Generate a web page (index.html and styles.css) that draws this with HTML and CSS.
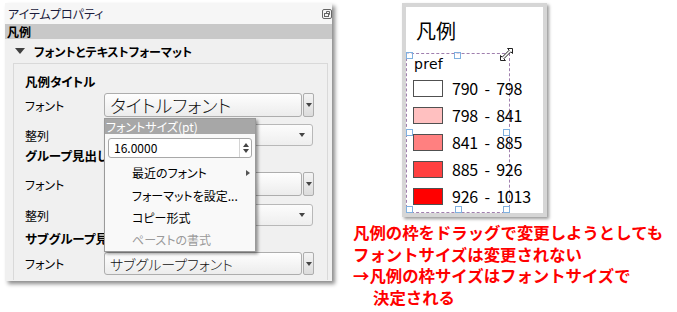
FILE: index.html
```html
<!DOCTYPE html>
<html lang="ja">
<head>
<meta charset="utf-8">
<title>凡例</title>
<link rel="stylesheet" href="styles.css">
</head>
<body>
<div class="page">
  <div class="props">
    <div class="titlebar">
      <span>アイテムプロパティ</span>
      <svg class="float-icon" width="10" height="10" viewBox="0 0 10 10"><rect x="0.5" y="0.5" width="9" height="9" rx="1.5" fill="none" stroke="#666"/><rect x="2.5" y="4.5" width="4" height="3" fill="none" stroke="#666"/><path d="M4.5 4.5V2.5H7.5V5.5H6.5" fill="none" stroke="#666"/></svg>
    </div>
    <div class="header">凡例</div>
    <div class="section"><span class="tri"></span>フォントとテキストフォーマット</div>
    <div class="group">
      <div class="heading h1">凡例タイトル</div>
      <div class="row fontrow f1"><span class="label">フォント</span><div class="fontbtn big">タイトルフォント</div><div class="dropbtn"><i class="arr"></i></div></div>
      <div class="row comborow c1"><span class="label">整列</span><div class="combo"><i class="arr"></i></div></div>
      <div class="heading h2">グループ見出し</div>
      <div class="row fontrow f2"><span class="label">フォント</span><div class="fontbtn"></div><div class="dropbtn"><i class="arr"></i></div></div>
      <div class="row comborow c2"><span class="label">整列</span><div class="combo"><i class="arr"></i></div></div>
      <div class="heading h3">サブグループ見出し</div>
      <div class="row fontrow f3"><span class="label">フォント</span><div class="fontbtn mid">サブグループフォント</div><div class="dropbtn"><i class="arr"></i></div></div>
    </div>
    <div class="popup">
      <div class="pop-head">フォントサイズ(pt)</div>
      <div class="spin"><span class="spin-val">16.0000</span><span class="spin-btns"><i class="up"></i><i class="down"></i></span></div>
      <div class="item"><span>最近のフォント</span><i class="sub"></i></div>
      <div class="item"><span>フォーマットを設定...</span></div>
      <div class="item"><span>コピー形式</span></div>
      <div class="item disabled"><span>ペーストの書式</span></div>
    </div>
  </div>
  <div class="right">
    <div class="legend">
      <div class="legend-title">凡例</div>
      <div class="frame">
        <div class="pref">pref</div>
        <div class="entry"><span class="sw sw1"></span><span class="rng">790 - 798</span></div>
        <div class="entry"><span class="sw sw2"></span><span class="rng">798 - 841</span></div>
        <div class="entry"><span class="sw sw3"></span><span class="rng">841 - 885</span></div>
        <div class="entry"><span class="sw sw4"></span><span class="rng">885 - 926</span></div>
        <div class="entry"><span class="sw sw5"></span><span class="rng">926 - 1013</span></div>
        <span class="hd tl"></span><span class="hd tm"></span>
        <span class="hd ml"></span><span class="hd mr"></span>
        <span class="hd bl"></span><span class="hd bm"></span><span class="hd br"></span>
        <svg class="cursor" width="15" height="15" viewBox="0 0 15 15"><path d="M8.5 1.5H13.5V6.5L11.8 4.8L4.8 11.8L6.5 13.5H1.5V8.5L3.2 10.2L10.2 3.2Z" fill="#fff" stroke="#222" stroke-width="1" stroke-linejoin="round"/></svg>
      </div>
    </div>
    <div class="note">
      <div>凡例の枠をドラッグで変更しようとしても</div>
      <div>フォントサイズは変更されない</div>
      <div>→凡例の枠サイズはフォントサイズで</div>
      <div class="indent">決定される</div>
    </div>
  </div>
</div>
</body>
</html>
```

FILE: styles.css
```css
* { box-sizing: border-box; margin: 0; padding: 0; }
body { background: #fff; font-family: "Noto Sans CJK JP", "Noto Sans", sans-serif; }
.page { display: flex; align-items: flex-start; gap: 21px; padding: 3px 0 0 5px; }

/* left properties panel */
.props { position: relative; width: 327px; height: 278px; background: #f0f0f0; box-shadow: 3px 3px 4px rgba(0,0,0,.45); display: flex; flex-direction: column; font-size: 12px; font-feature-settings: "palt"; color: #000; }
.titlebar { height: 21px; display: flex; align-items: center; justify-content: space-between; padding-left: 3px; background: #f6f6f6; color: #1b1b3c; }
.float-icon { display: block; margin-right: 0; }
.header { height: 15px; line-height: 15px; background: #c8c8c8; font-weight: bold; padding-left: 2px; }
.section { height: 24px; display: flex; align-items: center; padding-left: 10px; font-weight: bold; }
.tri { width: 0; height: 0; border-left: 5px solid transparent; border-right: 5px solid transparent; border-top: 6px solid #404040; margin-right: 9px; }
.group { margin: 0 4px 0 8px; height: 217px; border: 1px solid #d9d9d9; border-bottom: none; padding-left: 11px; display: flex; flex-direction: column; }
.heading { height: 20px; line-height: 20px; font-weight: bold; font-size: 12.5px; }
.h1 { margin-top: 8px; }
.h3 { margin-top: 3px; }
.row { display: flex; align-items: stretch; }
.label { width: 79px; display: flex; align-items: center; }
.f1 { margin-top: 1px; height: 24px; }
.c1 { margin-top: 7px; height: 22px; }
.f2 { margin-top: 6px; height: 24px; }
.c2 { margin-top: 8px; height: 22px; }
.f3 { margin-top: 3px; height: 23px; }
.fontbtn { width: 198px; border: 1px solid #adadad; border-radius: 3px; background: linear-gradient(#fefefe, #ececec); display: flex; align-items: center; padding-left: 5px; color: #111; overflow: hidden; white-space: nowrap; }
.fontbtn.big { font-size: 18px; font-weight: 300; }
.fontbtn.mid { font-size: 14px; font-weight: 300; }
.dropbtn { width: 11px; margin-left: 1px; border: 1px solid #adadad; border-radius: 2px; background: linear-gradient(#f4f4f4, #dcdcdc); display: flex; align-items: center; justify-content: center; }
.combo { width: 209px; border: 1px solid #b8b8b8; border-radius: 3px; background: linear-gradient(#fcfcfc, #eeeeee); display: flex; align-items: center; justify-content: flex-end; padding-right: 7px; }
.arr { display: block; width: 0; height: 0; border-left: 3.5px solid transparent; border-right: 3.5px solid transparent; border-top: 4px solid #444; }

/* popup menu */
.popup { position: absolute; left: 99px; top: 115px; width: 152px; height: 134px; background: #f9f9f9; border: 1px solid #9a9a9a; box-shadow: 2px 2px 3px rgba(0,0,0,.4); display: flex; flex-direction: column; }
.pop-head { height: 15px; line-height: 15px; background: #a7a7a7; color: #fff; padding-left: 1px; }
.spin { margin: 4px 3px 0 3px; height: 20px; border: 1px solid #a8a8a8; border-radius: 3px; background: #fff; display: flex; align-items: center; justify-content: space-between; }
.spin-val { padding-left: 5px; }
.spin-btns { width: 12px; height: 100%; border-left: 1px solid #d4d4d4; display: flex; flex-direction: column; align-items: center; justify-content: center; gap: 2px; }
.spin-btns .up { width: 0; height: 0; border-left: 3.5px solid transparent; border-right: 3.5px solid transparent; border-bottom: 4px solid #444; }
.spin-btns .down { width: 0; height: 0; border-left: 3.5px solid transparent; border-right: 3.5px solid transparent; border-top: 4px solid #444; }
.item { height: 23px; display: flex; align-items: center; justify-content: space-between; padding: 0 5px 0 27px; }
.spin + .item { margin-top: 4px; }
.item.disabled { color: #9a9a9a; }
.sub { display: block; width: 0; height: 0; border-top: 3.5px solid transparent; border-bottom: 3.5px solid transparent; border-left: 4px solid #555; }

/* legend image */
.right { display: flex; flex-direction: column; }
.legend { margin-left: 49px; width: 145px; height: 214px; border: 4px solid #d6d6d6; background: #fff; box-shadow: 2px 2px 3px rgba(0,0,0,.4); display: flex; flex-direction: column; }
.legend-title { height: 46px; padding: 12px 0 0 10px; font-size: 20px; line-height: 24px; color: #000; }
.frame { position: relative; width: 104px; height: 160px; border: 1px dashed #a07fae; display: flex; flex-direction: column; }
.pref { margin: 2px 0 0 7px; font-size: 14px; line-height: 17px; font-family: "DejaVu Sans", sans-serif; letter-spacing: 0.3px; }
.entry { display: flex; align-items: center; height: 17px; margin-top: 10px; width: max-content; }
.pref + .entry { margin-top: 7px; }
.sw { flex: none; width: 30px; height: 17px; margin-left: 6px; border: 1px solid #505050; }
.sw1 { background: #ffffff; }
.sw2 { background: #ffc0c0; }
.sw3 { background: #ff8080; }
.sw4 { background: #ff4040; }
.sw5 { background: #ff0000; }
.rng { flex: none; margin-left: 9px; font-size: 16px; line-height: 17px; letter-spacing: -0.2px; word-spacing: 3px; white-space: nowrap; color: #000; }
.hd { position: absolute; width: 7px; height: 7px; border: 1px solid #7fb0e0; background: rgba(255,255,255,.6); }
.tl { left: -1px; top: -2px; }
.tm { left: 47px; top: -2px; }
.ml { left: -1px; top: 75px; }
.mr { left: 96px; top: 75px; }
.bl { left: -1px; top: 152px; }
.bm { left: 48px; top: 152px; }
.br { left: 96px; top: 152px; }
.cursor { position: absolute; left: 92px; top: -7px; }

/* red note */
.note { margin-top: 5px; color: #ff0000; font-weight: bold; font-size: 16.4px; line-height: 21.5px; white-space: nowrap; }
.indent { padding-left: 20px; }
```
